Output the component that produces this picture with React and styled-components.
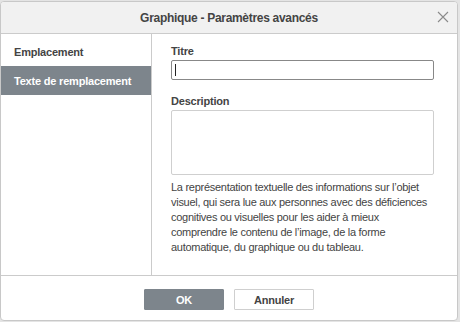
import React from 'react'
import styled, { createGlobalStyle } from 'styled-components'

const Global = createGlobalStyle`
  html, body {
    margin: 0;
    padding: 0;
    background: #e4e4e4;
    font-family: "Liberation Sans", Arial, sans-serif;
  }
`

const hintLines = [
  'La représentation textuelle des informations sur l’objet',
  'visuel, qui sera lue aux personnes avec des déficiences',
  'cognitives ou visuelles pour les aider à mieux',
  'comprendre le contenu de l’image, de la forme',
  'automatique, du graphique ou du tableau.',
]

const App = () => {
  return (
    <Page>
      <Global />
      <Dialog>
        <Header>
          <h1>Graphique - Paramètres avancés</h1>
          <Close aria-label="close">
            <svg width="12" height="12" viewBox="0 0 12 12">
              <path d="M1 1 L11 11 M11 1 L1 11" stroke="#8a8a8a" strokeWidth="1.1" fill="none" />
            </svg>
          </Close>
        </Header>
        <Body>
          <Sidebar>
            <SideItem>Emplacement</SideItem>
            <SideItem $active>Texte de remplacement</SideItem>
          </Sidebar>
          <Content>
            <Label>Titre</Label>
            <TitleInput>
              <Caret />
            </TitleInput>
            <Label $top={15}>Description</Label>
            <TextBox />
            <Hint>
              {hintLines.map(line => (
                <span key={line}>{line}</span>
              ))}
            </Hint>
          </Content>
        </Body>
        <Footer>
          <Button $primary>OK</Button>
          <Button>Annuler</Button>
        </Footer>
      </Dialog>
    </Page>
  )
}

const Page = styled.div`
  width: 460px;
  height: 322px;
  padding-top: 1px;
  box-sizing: border-box;
`

const Dialog = styled.div`
  width: 458px;
  height: 320px;
  box-sizing: border-box;
  background: #fff;
  border: 1px solid #c8c8c8;
  border-radius: 4px;
  display: flex;
  flex-direction: column;
  overflow: hidden;
  color: #444;
`

const Header = styled.div`
  height: 32px;
  flex: none;
  box-sizing: border-box;
  background: #f1f1f1;
  border-bottom: 1px solid #cbcbcb;
  display: flex;
  align-items: center;
  justify-content: center;
  position: relative;
  h1{
    margin: 0;
    font-size: 12px;
    letter-spacing: -0.3px;
    font-weight: bold;
    color: #444;
  }
`

const Close = styled.div`
  position: absolute;
  right: 8px;
  top: 9px;
  width: 12px;
  height: 12px;
  display: flex;
`

const Body = styled.div`
  flex: 1;
  display: flex;
  border-bottom: 1px solid #cbcbcb;
`

const Sidebar = styled.div`
  width: 151px;
  flex: none;
  border-right: 1px solid #cbcbcb;
  padding-top: 3px;
  box-sizing: border-box;
`

const SideItem = styled.div`
  height: 29px;
  display: flex;
  align-items: center;
  padding-left: 13px;
  font-size: 11px;
  letter-spacing: -0.2px;
  font-weight: bold;
  color: ${p => (p.$active ? '#fff' : '#444')};
  background: ${p => (p.$active ? '#7d858c' : 'transparent')};
`

const Content = styled.div`
  flex: 1;
  padding: 11px 23px 0 19px;
  display: flex;
  flex-direction: column;
`

const Label = styled.div`
  font-size: 11px;
  letter-spacing: -0.2px;
  font-weight: bold;
  line-height: 13px;
  margin-top: ${p => p.$top || 0}px;
  margin-bottom: 2px;
`

const TitleInput = styled.div`
  height: 20px;
  box-sizing: border-box;
  border: 1px solid #888;
  border-radius: 2px;
  display: flex;
  align-items: center;
  padding-left: 3px;
`

const Caret = styled.span`
  width: 1px;
  height: 12px;
  background: #222;
`

const TextBox = styled.div`
  height: 65px;
  box-sizing: border-box;
  border: 1px solid #cfcfcf;
  border-radius: 2px;
`

const Hint = styled.p`
  margin: 5px -6px 0 0;
  font-size: 11px;
  letter-spacing: -0.28px;
  line-height: 15px;
  color: #444;
  span{
    display: block;
    white-space: nowrap;
  }
`

const Footer = styled.div`
  flex: none;
  height: 44px;
  display: flex;
  justify-content: center;
  align-items: center;
  gap: 10px;
  padding-top: 3px;
  box-sizing: border-box;
`

const Button = styled.div`
  width: 80px;
  height: 21px;
  box-sizing: border-box;
  display: flex;
  align-items: center;
  justify-content: center;
  font-size: 11px;
  letter-spacing: -0.2px;
  font-weight: bold;
  border-radius: 1px;
  color: ${p => (p.$primary ? '#fff' : '#444')};
  background: ${p => (p.$primary ? '#7d858c' : '#fff')};
  border: 1px solid ${p => (p.$primary ? '#7d858c' : '#cfcfcf')};
`

export default App
